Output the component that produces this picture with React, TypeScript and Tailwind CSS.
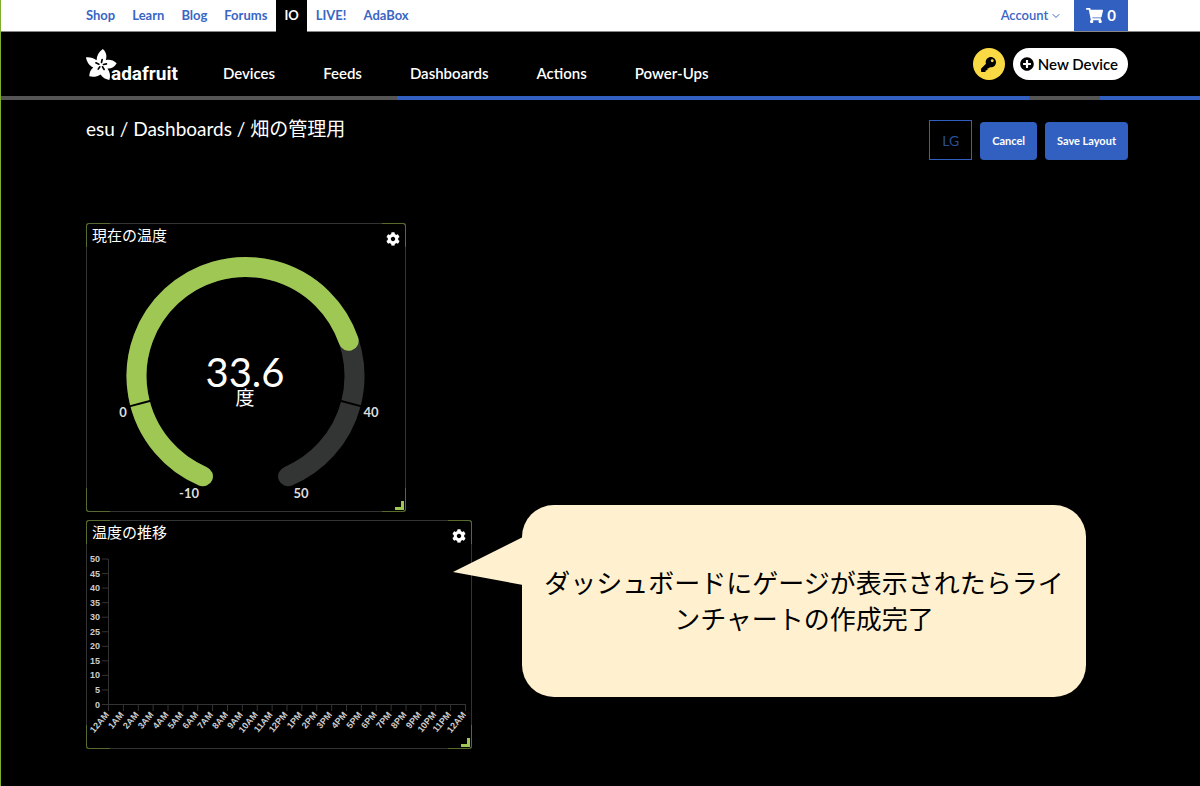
import { ReactNode } from 'react';
import { FaCog, FaKey, FaPlusCircle, FaShoppingCart } from 'react-icons/fa';
import { ChevronDown } from 'lucide-react';

const GREEN = '#9fc754';

const siteLinks = ['Shop', 'Learn', 'Blog', 'Forums', 'IO', 'LIVE!', 'AdaBox'];
const sections = ['Devices', 'Feeds', 'Dashboards', 'Actions', 'Power-Ups'];
const hours = [
  '12AM', '1AM', '2AM', '3AM', '4AM', '5AM', '6AM', '7AM', '8AM', '9AM', '10AM', '11AM',
  '12PM', '1PM', '2PM', '3PM', '4PM', '5PM', '6PM', '7PM', '8PM', '9PM', '10PM', '11PM', '12AM'
];
const levels = [50, 45, 40, 35, 30, 25, 20, 15, 10, 5, 0];

function Flower() {
  return (
    <svg viewBox="78 26 94 94" className="size-[31px]">
      <path
        fill="#fff"
        d="M129 26C140 36 142 48 138 60C149 57 161 60 171 69C165 80 155 86 143 85C151 95 153 108 149 120C138 118 128 112 122 103C113 110 100 112 88 109C88 98 92 88 100 82C88 77 80 65 78 51C90 50 102 53 110 60C111 45 117 34 129 26Z"
      />
      <path
        d="M125 67L127 58M131 73L140 71M128 80L133 88M120 80L115 87M117 72L108 68"
        stroke="#000"
        strokeWidth="5"
        strokeLinecap="round"
      />
    </svg>
  );
}

function SiteBar() {
  return (
    <div className="flex h-8 items-stretch justify-between border-b border-[#888] bg-white pl-[77px] pr-[72px] text-[13px] font-bold text-[#3a66c4]">
      <nav className="flex gap-px">
        {siteLinks.map((name) => (
          <a
            key={name}
            href="#"
            className={name === 'IO' ? '-mb-px flex items-center bg-black px-2 text-white' : 'flex items-center px-2'}
          >
            {name}
          </a>
        ))}
      </nav>
      <div className="flex">
        <button className="flex items-center gap-[2px] pr-3 font-semibold">
          Account
          <ChevronDown className="size-3" />
        </button>
        <a href="#" className="flex items-center gap-1 bg-[#3260c0] px-3 text-[15px] font-bold text-white">
          <FaShoppingCart className="size-[17px]" />0
        </a>
      </div>
    </div>
  );
}

function Header() {
  return (
    <header>
      <SiteBar />
      <div className="flex h-16 items-center justify-between pl-[85px] pr-[72px]">
        <div className="flex items-center">
          <a href="#" className="mt-1 flex items-baseline">
            <Flower />
            <span className="-ml-[6px] font-['Roboto'] text-[19px] leading-5 font-bold">adafruit</span>
          </a>
          <nav className="mt-[18px] ml-[45px] flex gap-12 text-[15px] leading-5 font-semibold">
            {sections.map((name) => (
              <a key={name} href="#">
                {name}
              </a>
            ))}
          </nav>
        </div>
        <div className="flex gap-2">
          <button aria-label="Key" className="flex size-8 items-center justify-center rounded-full bg-[#f9da44] text-black">
            <FaKey className="size-[15px]" />
          </button>
          <button className="flex h-8 items-center gap-1 rounded-full bg-white pr-[10px] pl-[7px] text-[15px] font-semibold text-black">
            <FaPlusCircle className="size-[14px]" />
            New Device
          </button>
        </div>
      </div>
      <div className="flex h-1 bg-[#3260c0]">
        <div className="w-[33%] bg-[#555]" />
        <div className="w-[52.7%]" />
        <div className="w-[6%] bg-[#555]" />
      </div>
    </header>
  );
}

function Block({ title, className, children }: { title: string; className: string; children: ReactNode }) {
  return (
    <section className={`relative rounded-[3px] border border-[#333] ${className}`}>
      <span className="absolute -top-px -left-px size-6 rounded-tl-[3px] border-t border-l border-[#566b2d]" />
      <span className="absolute -top-px -right-px size-6 rounded-tr-[3px] border-t border-r border-[#566b2d]" />
      <span className="absolute -bottom-px -left-px size-6 rounded-bl-[3px] border-b border-l border-[#566b2d]" />
      <span className="absolute -right-px -bottom-px size-6 rounded-br-[3px] border-r border-b border-[#566b2d]" />
      <span className="absolute right-px bottom-px size-[9px] border-r-[3px] border-b-[3px] border-[#9fc754]" />
      <div className="flex h-6 justify-between px-[5px]">
        <h2 className="text-[15px] leading-[22px]">{title}</h2>
        <button aria-label="Block settings" className="mt-2 size-[14px]">
          <FaCog className="size-[14px]" />
        </button>
      </div>
      {children}
    </section>
  );
}

const CX = 158.5;
const CY = 128;
const R = 109;

// degrees run clockwise from the bottom of the dial
function dialPoint(value: number, r = R) {
  const a = ((23 + ((value + 10) / 60) * 314) * Math.PI) / 180;
  return [CX - r * Math.sin(a), CY + r * Math.cos(a)];
}

function arc(from: number, to: number) {
  const [x1, y1] = dialPoint(from);
  const [x2, y2] = dialPoint(to);
  const large = ((to - from) / 60) * 314 > 180 ? 1 : 0;
  return `M${x1} ${y1}A${R} ${R} 0 ${large} 1 ${x2} ${y2}`;
}

function Gauge({ value, unit }: { value: number; unit: string }) {
  return (
    <svg viewBox="0 0 318 263" className="block w-full" fill="none">
      <path d={arc(-10, 50)} stroke="#333434" strokeWidth="20" strokeLinecap="round" />
      <path d={arc(-10, value)} stroke={GREEN} strokeWidth="20" strokeLinecap="round" />
      {[0, 40].map((mark) => {
        const [x1, y1] = dialPoint(mark, 98);
        const [x2, y2] = dialPoint(mark, 121);
        return <line key={mark} x1={x1} y1={y1} x2={x2} y2={y2} stroke="#000" strokeWidth="2" />;
      })}
      <g fill="#ddd" fontSize="13" fontWeight="700" textAnchor="middle">
        <text x="36" y="169">0</text>
        <text x="284" y="169">40</text>
        <text x="102" y="250">-10</text>
        <text x="214" y="250">50</text>
      </g>
      <g fill="#fff" textAnchor="middle">
        <text x="158" y="139" fontSize="40">{value}</text>
        <text x="158" y="157" fontSize="19">{unit}</text>
      </g>
    </svg>
  );
}

function LineChart() {
  const step = 357 / 24;
  return (
    <svg viewBox="0 0 384 203" className="block w-full font-['Liberation_Sans']" fontSize="9">
      <path d="M21.5 14V160M21 159.5H379" stroke="#333" />
      {levels.map((level, i) => (
        <g key={level}>
          <line x1="15" x2="21" y1={14 + i * 14.55} y2={14 + i * 14.55} stroke="#333" />
          <text x="13" y={17 + i * 14.55} fill="#ccc" fontWeight="700" textAnchor="end">
            {level}
          </text>
        </g>
      ))}
      {hours.map((hour, i) => (
        <g key={i} transform={`translate(${21.5 + i * step} 160)`}>
          <line y2="6" stroke="#333" />
          <text transform="translate(1 10) rotate(-50)" fill="#ccc" fontWeight="700" textAnchor="end">
            {hour}
          </text>
        </g>
      ))}
    </svg>
  );
}

function Callout({ children }: { children: ReactNode }) {
  return (
    <aside className="absolute top-[405px] left-[521px] flex h-48 w-[564px] items-center justify-center rounded-[32px] bg-[#fff1cf] px-[22px] text-center text-[26px] leading-9 text-black">
      <svg viewBox="0 0 70 48" className="absolute top-8 -left-[69px] w-[70px]">
        <path d="M70 0L0 35L70 48Z" fill="#fff1cf" />
      </svg>
      <p>{children}</p>
    </aside>
  );
}

export default function App() {
  return (
    <div className="min-h-screen border-l border-[#7fae2e] bg-black font-['Lato','Noto_Sans_CJK_JP',sans-serif] text-white">
      <Header />
      <main className="relative pt-5 pr-[72px] pb-9 pl-[85px]">
        <div className="flex items-start justify-between">
          <h1 className="text-[19px] leading-[18px]">
            <a href="#">esu</a> / <a href="#">Dashboards</a> / 畑の管理用
          </h1>
          <div className="flex items-end gap-2 text-[11px] font-bold">
            <button className="h-10 border border-[#3260c0] px-3 text-[14px] font-normal text-[#28509a]">LG</button>
            <button className="h-[38px] rounded bg-[#3260c0] px-3">Cancel</button>
            <button className="h-[38px] rounded bg-[#3260c0] px-3">Save Layout</button>
          </div>
        </div>
        <div className="mt-[63px] flex flex-col gap-2">
          <Block title="現在の温度" className="w-[320px]">
            <Gauge value={33.6} unit="度" />
          </Block>
          <Block title="温度の推移" className="w-[386px]">
            <LineChart />
          </Block>
        </div>
        <Callout>ダッシュボードにゲージが表示されたらラインチャートの作成完了</Callout>
      </main>
    </div>
  );
}
